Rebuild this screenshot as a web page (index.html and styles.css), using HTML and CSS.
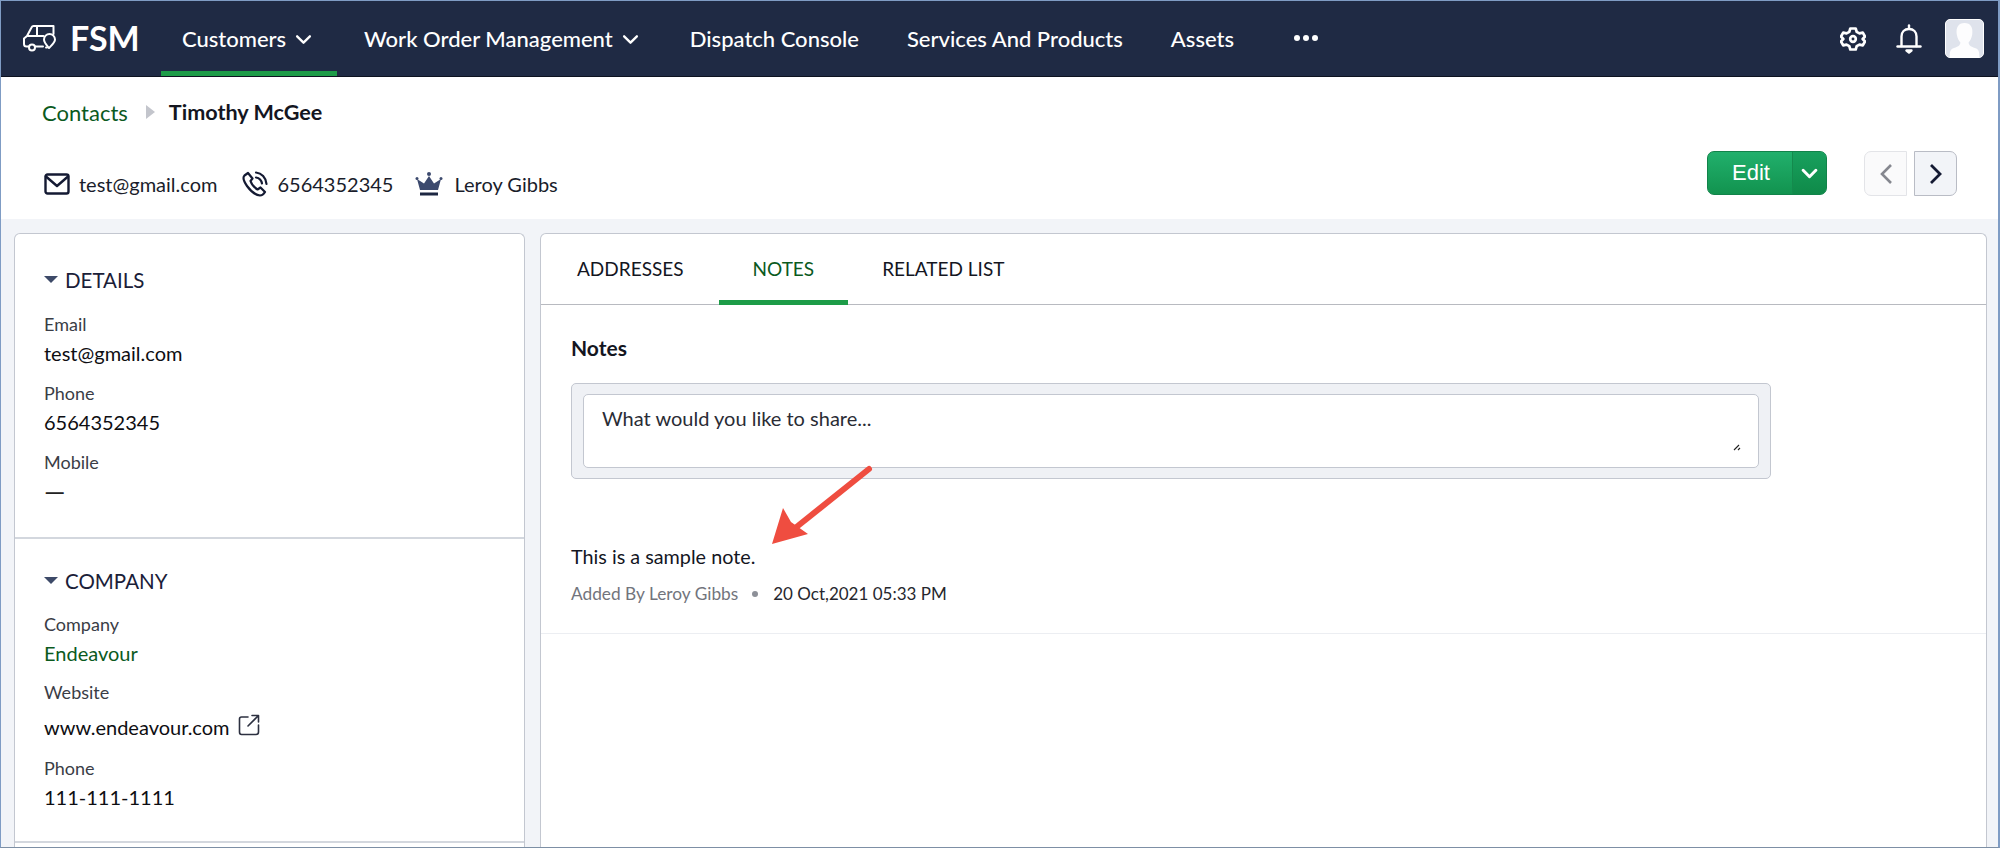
FILE: index.html
```html
<!DOCTYPE html>
<html lang="en">
<head>
<meta charset="utf-8">
<title>FSM - Timothy McGee</title>
<link rel="stylesheet" href="styles.css">
</head>
<body>
<div class="frame">
  <header class="topbar">
    <div class="brand">
      <svg class="brand-icon" viewBox="0 0 36 28" fill="none" stroke="#fff" stroke-width="2" stroke-linejoin="round" stroke-linecap="round">
        <path d="M21 22.5H13M7 22.5H4.5C3 22.5 2 21.5 2 20V14.5L5 12L9.5 3.5C10 2.5 10.500 2 11.500 2H31.500V10"/>
        <path d="M6 12H21.500M15 3V11"/>
        <circle cx="10" cy="23.500" r="3"/>
        <path d="M27 24C24 20.500 22 18.500 22 15.500A5.500 5.500 0 0 1 33 15.500C33 18.500 30 21 27 24Z"/>
        <path d="M24 23.500H25"/>
      </svg>
      <span class="brand-name">FSM</span>
    </div>
    <nav class="menu">
      <a class="menu-item active">Customers
        <svg class="chev" viewBox="0 0 16 10" fill="none" stroke="#fff" stroke-width="2.200" stroke-linecap="round" stroke-linejoin="round"><path d="M2 2L8 8L14 2"/></svg>
      </a>
      <a class="menu-item wom">Work Order Management
        <svg class="chev" viewBox="0 0 16 10" fill="none" stroke="#fff" stroke-width="2.200" stroke-linecap="round" stroke-linejoin="round"><path d="M2 2L8 8L14 2"/></svg>
      </a>
      <a class="menu-item">Dispatch Console</a>
      <a class="menu-item">Services And Products</a>
      <a class="menu-item">Assets</a>
      <a class="menu-item more"><i></i><i></i><i></i></a>
    </nav>
    <div class="tools">
      <svg class="gear" viewBox="0 0 26 26" fill="none" stroke="#fff" stroke-width="2.700" stroke-linejoin="round">
        <path d="M10.300 2.500H15.700L16.700 5.800L19.500 7.400L22.800 6.600L25 10.500L22.700 13L25 15.500L22.800 19.400L19.500 18.600L16.700 20.200L15.700 23.500H10.300L9.300 20.200L6.500 18.600L3.200 19.400L1 15.500L3.300 13L1 10.500L3.200 6.600L6.500 7.400L9.300 5.800Z"/>
        <circle cx="13" cy="13" r="2.800"/>
      </svg>
      <svg class="bell" viewBox="0 0 26 30" fill="none" stroke="#fff" stroke-width="2.400" stroke-linecap="round" stroke-linejoin="round">
        <path d="M5.500 22V12.500C5.500 8 8.500 5 13 5C17.500 5 20.500 8 20.500 12.500V22"/>
        <path d="M1.500 22.500H24.500"/>
        <path d="M13 1.500V4"/>
        <path d="M10.500 26.500H15.500L13 28.500Z" fill="#fff"/>
      </svg>
      <div class="avatar">
        <svg viewBox="0 0 36 36"><rect width="36" height="36" fill="#dfe3ec"/><path d="M18 3C12 3 9.500 7.500 10.500 14C11 17.500 12.500 20 14 22C14 25 11 26.500 6 28C4 29 3.500 32 3.500 36H32.500C32.500 32 32 29 30 28C25 26.500 22 25 22 22C23.500 20 25 17.500 25.500 14C26.500 7.500 24 3 18 3Z" fill="#fdfdfe"/></svg>
      </div>
    </div>
  </header>

  <section class="head">
    <div class="crumbs">
      <a class="crumb-link">Contacts</a>
      <span class="crumb-sep"></span>
      <span class="crumb-current">Timothy McGee</span>
    </div>
    <div class="head-row">
      <div class="facts">
        <span class="fact email-fact">
          <svg class="fact-icon mail" viewBox="0 0 26 22" fill="none" stroke="#141a33" stroke-width="2.400" stroke-linejoin="round" stroke-linecap="round"><rect x="1.500" y="1.500" width="23" height="19" rx="2"/><path d="M2 3.500L13 13L24 3.500"/></svg>
          test@gmail.com
        </span>
        <span class="fact">
          <svg class="fact-icon phone" viewBox="0 0 26 26" fill="none" stroke="#141a33" stroke-width="2.200" stroke-linecap="round" stroke-linejoin="round"><path d="M6 2L2.500 4.500C1 6 1.500 10 5 15C9 20.500 14 24 18 24.500C20 24.500 21.500 23.500 23 21L18.500 16.500L15.500 18.500C13 17 9.500 13 8.500 10L10.500 7.500Z"/><path d="M14 1.500C19.500 2 24 6.500 24.500 13"/><path d="M14 6.500C17 7 19.500 9.500 20 12.500"/></svg>
          6564352345
        </span>
        <span class="fact">
          <svg class="fact-icon crown" viewBox="0 0 28 26"><path d="M14 5L19 12.500L26 8L23 19H5L2 8L9 12.500Z" fill="#3c4a6e"/><circle cx="14" cy="3" r="2" fill="#3c4a6e"/><circle cx="2" cy="7.500" r="1.500" fill="#3c4a6e"/><circle cx="26" cy="7.500" r="1.500" fill="#3c4a6e"/><rect x="5" y="21.500" width="18" height="3" fill="#1d2742"/></svg>
          Leroy Gibbs
        </span>
      </div>
      <div class="actions">
        <div class="edit">
          <span class="edit-label">Edit</span>
          <span class="edit-more">
            <svg viewBox="0 0 16 10" fill="none" stroke="#fff" stroke-width="2.800" stroke-linecap="round" stroke-linejoin="round"><path d="M2 2L8 8L14 2"/></svg>
          </span>
        </div>
        <div class="pager">
          <span class="page-btn prev"><svg viewBox="0 0 14 22" fill="none" stroke="#85878f" stroke-width="2.600"><path d="M12 2L3 11L12 20"/></svg></span>
          <span class="page-btn next"><svg viewBox="0 0 14 22" fill="none" stroke="#141a33" stroke-width="2.800"><path d="M2 2L11 11L2 20"/></svg></span>
        </div>
      </div>
    </div>
  </section>

  <main class="content">
    <aside class="side">
      <section class="panel details">
        <h2 class="panel-title"><span class="caret"></span>DETAILS</h2>
        <div class="field"><div class="label">Email</div><div class="value">test@gmail.com</div></div>
        <div class="field"><div class="label">Phone</div><div class="value">6564352345</div></div>
        <div class="field"><div class="label">Mobile</div><div class="value dash">—</div></div>
      </section>
      <section class="panel company">
        <h2 class="panel-title"><span class="caret"></span>COMPANY</h2>
        <div class="field tight"><div class="label">Company</div><div class="value green">Endeavour</div></div>
        <div class="field web"><div class="label">Website</div><div class="value">www.endeavour.com
          <svg class="ext" viewBox="0 0 22 22" fill="none" stroke="#2c3040" stroke-width="1.600" stroke-linecap="round" stroke-linejoin="round"><path d="M10 3H3.500C2.500 3 1.500 4 1.500 5V18C1.500 19.500 2.500 20.500 3.500 20.500H18C19.500 20.500 20.500 19.500 20.500 18V11"/><path d="M10 12L20 2M14 1.500H20.500V8"/></svg>
        </div></div>
        <div class="field"><div class="label">Phone</div><div class="value">111-111-1111</div></div>
      </section>
    </aside>

    <section class="main-card">
      <div class="tabs">
        <a class="tab">ADDRESSES</a>
        <a class="tab active">NOTES</a>
        <a class="tab">RELATED LIST</a>
      </div>
      <div class="notes">
        <h3 class="notes-title">Notes</h3>
        <div class="composer">
          <div class="composer-input">
            What would you like to share...
            <svg class="grip" viewBox="0 0 8 8" stroke="#222" stroke-width="1.100" fill="none"><path d="M1 7L6 2M5 7L7 5"/></svg>
          </div>
        </div>
        <p class="note-text">This is a sample note.</p>
        <div class="note-meta">
          <span class="by">Added By Leroy Gibbs</span>
          <span class="meta-dot"></span>
          <span class="when">20 Oct,2021 05:33 PM</span>
        </div>
      </div>
      <div class="note-rule"></div>
    </section>
  </main>

  <svg class="arrow" viewBox="0 0 110 90" fill="none">
    <path d="M98 6L23 66" stroke="#ef4d40" stroke-width="6" stroke-linecap="round"/>
    <path d="M0 85L11 49L19 63L36 75Z" fill="#ef4d40" transform="translate(1 -4)"/>
  </svg>
</div>
</body>
</html>
```

FILE: styles.css
```css
* { box-sizing: border-box; }
html, body { margin: 0; padding: 0; height: 100%; overflow: hidden; background: #fff; }
body { font-family: "Lato", "Liberation Sans", sans-serif; color: #111; }
a { color: inherit; text-decoration: none; }
h2, h3, p { margin: 0; font-weight: inherit; font-size: inherit; }
svg { display: block; flex: none; }

.frame {
  position: relative;
  width: 2000px;
  height: 848px;
  border: 1px solid #7f9cc4;
  border-bottom-color: #7d8fa5;
  border-right-width: 2px;
  display: flex;
  flex-direction: column;
  overflow: hidden;
  background: #fff;
}

/* top bar */
.topbar {
  flex: none;
  height: 76px;
  background: #1f2a44;
  display: flex;
  align-items: stretch;
  color: #fff;
  border-bottom: 1px solid #0d1220;
}
.brand { display: flex; align-items: center; width: 160px; padding-left: 21px; padding-bottom: 1px; }
.brand-icon { width: 36px; height: 28px; margin-right: 12px; }
.brand-name { font-size: 34px; font-weight: 700; line-height: 1; }
.menu { display: flex; align-items: stretch; flex: 1; font-size: 22px; font-weight: 500; }
.menu-item {
  display: flex;
  align-items: center;
  padding: 6px 24px 2px;
  border-bottom: 5px solid transparent;
  white-space: nowrap;
}
.menu-item.active { border-bottom-color: #1d9c48; width: 176px; margin-right: 3px; padding-left: 21px; padding-right: 0; }
.menu-item.wom { margin-right: 3px; }
.chev { width: 17px; height: 11px; margin-left: 9px; margin-top: 3px; }
.more { gap: 3px; padding-left: 36px; }
.more i { width: 6px; height: 6px; border-radius: 50%; background: #fff; display: block; }
.tools { display: flex; align-items: center; padding-right: 14px; }
.gear { width: 26px; height: 26px; margin-right: 30px; }
.bell { width: 26px; height: 30px; margin-right: 23px; }
.avatar {
  width: 39px;
  height: 39px;
  border-radius: 5px;
  overflow: hidden;
  background: #fff;
  border: 1px solid #fff;
}
.avatar svg { width: 100%; height: 100%; }

/* contact head */
.head { flex: none; height: 142px; padding: 0 41px; display: flex; flex-direction: column; }
.crumbs { display: flex; align-items: center; height: 72px; font-size: 22px; padding-bottom: 1px; }
.crumb-link { color: #0b5a1e; }
.crumb-sep {
  width: 0; height: 0;
  margin: 0 14px 0 18px;
  border-left: 9px solid #c3c5cc;
  border-top: 7px solid transparent;
  border-bottom: 7px solid transparent;
}
.crumb-current { font-weight: 700; font-size: 21.600px; color: #14161f; }
.head-row { flex: 1; display: flex; justify-content: space-between; align-items: flex-start; }
.facts { display: flex; align-items: center; height: 71px; font-size: 20px; color: #1a1d2b; }
.fact { display: flex; align-items: center; margin-right: 22px; }
.email-fact { margin-right: 25px; }
.fact-icon { margin-right: 9px; }
.mail { width: 26px; height: 22px; margin-left: 2px; }
.phone { width: 26px; height: 26px; }
.crown { width: 28px; height: 26px; margin-right: 11px; }
.actions { display: flex; padding-top: 3px; }
.edit {
  width: 120px;
  height: 44px;
  display: flex;
  border-radius: 7px;
  overflow: hidden;
  background: linear-gradient(#21b06c, #12934f);
  border: 1px solid #12834a;
  color: #fff;
  font-family: "Liberation Sans", Arial, sans-serif;
  font-size: 22px;
}
.edit-label { width: 84px; display: flex; align-items: center; justify-content: center; padding-left: 2px; }
.edit-more {
  flex: 1;
  display: flex;
  align-items: center;
  justify-content: center;
  background: linear-gradient(#18a05e, #0f8a49);
  border-left: 1px solid #148a4d;
}
.edit-more svg { width: 17px; height: 11px; }
.pager { display: flex; margin-left: 37px; gap: 7px; }
.page-btn {
  width: 43px;
  height: 45px;
  display: flex;
  align-items: center;
  justify-content: center;
  border: 1px solid #d9dbe0;
}
.page-btn svg { width: 14px; height: 22px; }
.prev { background: #fafafb; border-radius: 7px 0 0 7px; border-color: #e3e4e8; }
.next { background: #f2f4f8; border-radius: 0 7px 7px 0; border-color: #b9bcc5; }

/* content */
.content {
  flex: 1;
  min-height: 0;
  background: #f2f4f8;
  padding: 14px 11px 0 13px;
  display: grid;
  grid-template-columns: 511px 1fr;
  column-gap: 15px;
}
.side, .main-card {
  background: #fff;
  border: 1px solid #c3c7d0;
  border-bottom: 0;
  border-radius: 6px 6px 0 0;
  overflow: hidden;
}
.panel { border-bottom: 2px solid #d3d7de; padding: 0 0 0 29px; }
.details { height: 305px; padding-top: 34px; }
.company { height: 304px; padding-top: 30px; }
.panel-title { display: flex; align-items: center; font-size: 20.500px; color: #1a2038; line-height: 24px; margin-bottom: 21px; }
.company .panel-title { margin-bottom: 20px; }
.caret {
  width: 0; height: 0;
  margin-right: 7px;
  margin-top: -2px;
  border-top: 7px solid #3d4a68;
  border-left: 7px solid transparent;
  border-right: 7px solid transparent;
}
.field { margin-bottom: 16px; }
.field.tight { margin-bottom: 15px; }
.label { font-size: 18px; line-height: 22px; color: #3a3d46; margin-bottom: 6px; }
.value { font-size: 20px; line-height: 25px; color: #0e0e12; display: flex; align-items: center; }
.value.dash { color: #222; font-size: 27px; line-height: 23px; }
.green { color: #0b5a1e; }
.field.web { margin-bottom: 13px; }
.web .label { margin-bottom: 7px; }
.web .value { height: 34px; }
.ext { width: 22px; height: 22px; margin-left: 8px; margin-top: -4px; }

.tabs { height: 71px; display: flex; border-bottom: 1px solid #b8bac0; padding-left: 11px; font-size: 19px; color: #14161f; }
.tab { display: flex; align-items: center; padding: 2px 25px 0; height: 71px; border-bottom: 5px solid transparent; margin-bottom: -1px; }
.tab:first-child { padding-right: 35px; }
.tab.active { color: #0b5a1e; border-bottom-color: #1d9c48; padding: 2px 34px 0; }
.tab:last-child { padding-left: 34px; padding-right: 0; }
.notes { padding: 30px 0 0 30px; }
.notes-title { font-size: 21px; font-weight: 700; line-height: 26px; color: #14161f; }
.composer {
  width: 1200px;
  height: 96px;
  margin-top: 22px;
  padding: 10px 11px;
  background: #eff1f5;
  border: 1px solid #c3c7d0;
  border-radius: 5px;
}
.composer-input {
  position: relative;
  height: 74px;
  background: #fff;
  border: 1px solid #c3c7d0;
  border-radius: 5px;
  padding: 11px 18px;
  font-size: 20px;
  line-height: 25px;
  color: #2a2c35;
}
.grip { position: absolute; right: 17px; bottom: 16px; width: 8px; height: 8px; }
.note-text { margin-top: 65px; font-size: 19.800px; line-height: 25px; color: #14161f; }
.note-meta { display: flex; align-items: center; margin-top: 14px; line-height: 22px; }
.by { color: #72747c; font-size: 17.300px; }
.meta-dot { width: 6px; height: 6px; border-radius: 50%; background: #8d9098; margin: 0 15px 0 14px; }
.when { color: #26272e; font-size: 17px; }
.note-rule { height: 1px; background: #eceef2; margin-top: 28px; }

.arrow { position: absolute; left: 770px; top: 462px; width: 110px; height: 90px; }
```
